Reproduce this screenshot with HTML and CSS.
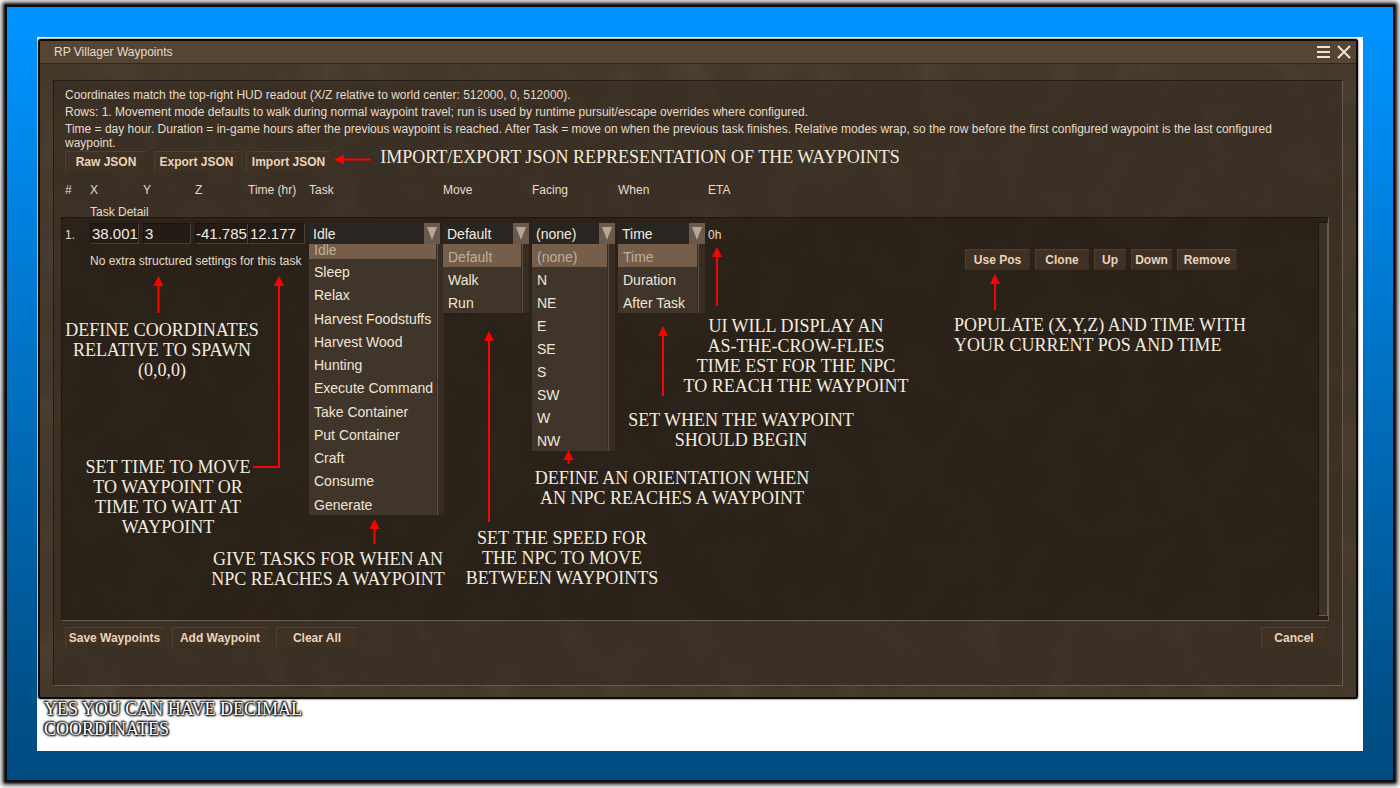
FILE: index.html
```html
<!DOCTYPE html>
<html lang="en">
<head>
  <meta charset="UTF-8">
  <meta name="viewport" content="width=device-width, initial-scale=1.0">
  <title>RP Villager Waypoints</title>
  <link rel="stylesheet" href="styles.css">
</head>
<body>
  <div class="frame">
    <div class="surface">
      <main class="window">
        <svg class="grain" aria-hidden="true">
          <filter id="grain" x="0" y="0" width="100%" height="100%">
            <feTurbulence type="fractalNoise" baseFrequency="0.025 0.02" numOctaves="4" seed="7"/>
            <feColorMatrix values="0 0 0 0 0.55  0 0 0 0 0.45  0 0 0 0 0.33  1.2 0 0 0 -0.45"/>
          </filter>
          <rect width="100%" height="100%" filter="url(#grain)"/>
        </svg>

        <header class="titlebar">
          <h1>RP Villager Waypoints</h1>
          <button class="icon-button" aria-label="Menu">
            <svg width="14" height="14" viewBox="0 0 14 14"><path d="M0 2h13M0 7h13M0 12h13"/></svg>
          </button>
          <button class="icon-button" aria-label="Close">
            <svg width="14" height="14" viewBox="0 0 14 14"><path d="M1 1l12 12M13 1L1 13"/></svg>
          </button>
        </header>

        <section class="panel">
          <div class="help">
            <p>Coordinates match the top-right HUD readout (X/Z relative to world center: 512000, 0, 512000).</p>
            <p>Rows: 1. Movement mode defaults to walk during normal waypoint travel; run is used by runtime pursuit/escape overrides where configured.</p>
            <p class="long">Time = day hour. Duration = in-game hours after the previous waypoint is reached. After Task = move on when the previous task finishes. Relative modes wrap, so the row before the first configured waypoint is the last configured waypoint.</p>
          </div>

          <div class="json-buttons">
            <button class="btn raw">Raw JSON</button>
            <button class="btn export">Export JSON</button>
            <button class="btn import">Import JSON</button>
          </div>

          <div class="columns head">
            <span>#</span>
            <label for="x">X</label>
            <label for="y">Y</label>
            <label for="z">Z</label>
            <label for="time">Time (hr)</label>
            <label for="task">Task</label>
            <label for="move">Move</label>
            <label for="facing">Facing</label>
            <label for="when">When</label>
            <span>ETA</span>
            <span class="detail">Task Detail</span>
          </div>

          <div class="list">
            <div class="columns row">
              <span class="number">1.</span>
              <input type="text" id="x" value="38.001">
              <input type="text" id="y" value="3">
              <input type="text" id="z" class="wide" value="-41.785">
              <input type="text" id="time" value="12.177">

              <div class="dropdown">
                <select id="task"><option>Idle</option></select>
                <span class="arrow"></span>
                <ul class="menu task-menu">
                  <li class="selected">Idle</li>
                  <li>Sleep</li>
                  <li>Relax</li>
                  <li>Harvest Foodstuffs</li>
                  <li>Harvest Wood</li>
                  <li>Hunting</li>
                  <li>Execute Command</li>
                  <li>Take Container</li>
                  <li>Put Container</li>
                  <li>Craft</li>
                  <li>Consume</li>
                  <li>Generate</li>
                </ul>
              </div>

              <div class="dropdown">
                <select id="move"><option>Default</option></select>
                <span class="arrow"></span>
                <ul class="menu">
                  <li class="selected">Default</li>
                  <li>Walk</li>
                  <li>Run</li>
                </ul>
              </div>

              <div class="dropdown">
                <select id="facing"><option>(none)</option></select>
                <span class="arrow"></span>
                <ul class="menu">
                  <li class="selected">(none)</li>
                  <li>N</li>
                  <li>NE</li>
                  <li>E</li>
                  <li>SE</li>
                  <li>S</li>
                  <li>SW</li>
                  <li>W</li>
                  <li>NW</li>
                </ul>
              </div>

              <div class="dropdown">
                <select id="when"><option>Time</option></select>
                <span class="arrow"></span>
                <ul class="menu">
                  <li class="selected">Time</li>
                  <li>Duration</li>
                  <li>After Task</li>
                </ul>
              </div>

              <span class="eta">0h</span>
              <span class="detail">No extra structured settings for this task</span>
              <div class="row-buttons">
                <button class="btn use-pos">Use Pos</button>
                <button class="btn clone">Clone</button>
                <button class="btn up">Up</button>
                <button class="btn down">Down</button>
                <button class="btn remove">Remove</button>
              </div>
            </div>
            <div class="scrollbar"></div>
          </div>

          <footer class="actions">
            <button class="btn save">Save Waypoints</button>
            <button class="btn add">Add Waypoint</button>
            <button class="btn clear">Clear All</button>
            <button class="btn cancel">Cancel</button>
          </footer>
        </section>
      </main>
      <p class="caption">YES YOU CAN HAVE DECIMAL<br>COORDINATES</p>
    </div>
  </div>

  <!-- Callouts drawn over the window -->
  <div class="notes">
    <svg class="arrows" width="1400" height="788" viewBox="0 0 1400 788" aria-hidden="true">
      <g class="lines">
        <path d="M371 159.500H343"/>
        <path d="M158.500 313V286"/>
        <path d="M253 467H279V286"/>
        <path d="M374.500 544V528"/>
        <path d="M489 522V340"/>
        <path d="M568.500 464V458"/>
        <path d="M663 396V335"/>
        <path d="M717 306V256"/>
        <path d="M995 310V283"/>
      </g>
      <g class="heads">
        <path d="M334 159.500l10-5v10z"/>
        <path d="M158.500 276l-5 10h10z"/>
        <path d="M279 276l-5 10h10z"/>
        <path d="M374.500 519l-5 10h10z"/>
        <path d="M489 331l-5 10h10z"/>
        <path d="M568.500 450l-5 10h10z"/>
        <path d="M663 326l-5 10h10z"/>
        <path d="M717 247l-5 10h10z"/>
        <path d="M995 274l-5 10h10z"/>
      </g>
    </svg>
    <p class="note json">IMPORT/EXPORT JSON REPRESENTATION OF THE WAYPOINTS</p>
    <p class="note coords">DEFINE COORDINATES<br>RELATIVE TO SPAWN<br>(0,0,0)</p>
    <p class="note time">SET TIME TO MOVE<br>TO WAYPOINT OR<br>TIME TO WAIT AT<br>WAYPOINT</p>
    <p class="note tasks">GIVE TASKS FOR WHEN AN<br>NPC REACHES A WAYPOINT</p>
    <p class="note speed">SET THE SPEED FOR<br>THE NPC TO MOVE<br>BETWEEN WAYPOINTS</p>
    <p class="note orientation">DEFINE AN ORIENTATION WHEN<br>AN NPC REACHES A WAYPOINT</p>
    <p class="note begin">SET WHEN THE WAYPOINT<br>SHOULD BEGIN</p>
    <p class="note eta-note">UI WILL DISPLAY AN<br>AS-THE-CROW-FLIES<br>TIME EST FOR THE NPC<br>TO REACH THE WAYPOINT</p>
    <p class="note populate">POPULATE (X,Y,Z) AND TIME WITH<br>YOUR CURRENT POS AND TIME</p>
  </div>
</body>
</html>
```
FILE: styles.css
```css
* {
  box-sizing: border-box;
}

body {
  position: relative;
  display: flex;
  min-height: 100vh;
  margin: 0;
  padding: 7px 7px 8px;
  background: #fff;
  color: #e6dccb;
  font-family: "Liberation Sans", Arial, sans-serif;
  font-size: 12px;
  overflow: hidden;
}

h1, p, ul {
  margin: 0;
  padding: 0;
}

button, input, select {
  margin: 0;
  font-family: inherit;
}

.frame {
  display: flex;
  flex: 1;
  padding: 30px 30px 29px;
  background: linear-gradient(#0093ff, #0091fb 6%, #004f87 92%, #004b80);
  box-shadow: 0 0 2px 3px #0a0a0a, 0 0 5px 5px #444;
}

.surface {
  display: flex;
  flex: 1;
  flex-direction: column;
  padding: 2px 5px 0 1px;
  background: #fff;
}

.window {
  position: relative;
  display: flex;
  flex: 1;
  flex-direction: column;
  border: 2px solid #0d0a08;
  border-radius: 3px;
  background: #43372a;
  box-shadow: 0 0 2px #000;
}

.grain {
  position: absolute;
  inset: 0;
  width: 100%;
  height: 100%;
  opacity: 0.12;
}

.titlebar {
  position: relative;
  display: flex;
  align-items: center;
  gap: 6px;
  height: 23px;
  padding: 0 5px 0 14px;
  border-bottom: 1px solid #30271e;
  background: #554535;
}

.titlebar h1 {
  flex: 1;
  font-size: 12px;
  font-weight: normal;
}

.icon-button {
  display: flex;
  padding: 0;
  border: none;
  background: none;
}

.icon-button svg {
  fill: none;
  stroke: #f0e4d0;
  stroke-width: 2;
}

.panel {
  position: relative;
  display: flex;
  flex: 1;
  flex-direction: column;
  margin: 16px 13px 11px;
  padding: 6px 13px 37px 11px;
  border: 1px solid;
  border-color: #241c15 #6b5d4b #6b5d4b #241c15;
  background: rgba(46, 36, 28, 0.4);
}

.help {
  padding-right: 10px;
}

.help p {
  line-height: 17px;
}

.help .long {
  margin-top: 1px;
  line-height: 14px;
}

.btn {
  height: 21px;
  padding: 0;
  border: 1px solid;
  border-color: #4c4033 #3a2d22 #3a2d22 #4c4033;
  background: #403125;
  color: #e9d5bb;
  font-size: 12px;
  font-weight: bold;
  white-space: nowrap;
}

.json-buttons {
  display: flex;
  gap: 7px;
  margin-top: 1px;
}

.raw, .clear {
  width: 82px;
}

.export, .import {
  width: 85px;
}

.columns {
  display: grid;
  grid-template-columns: 25px 53px 52px 53px 61px 134px 89px 86px 90px 1fr;
}

.head {
  margin-top: 10px;
  grid-template-rows: 22px 13px;
  line-height: 16px;
}

.detail {
  grid-column: 2 / span 4;
  white-space: nowrap;
}

.list {
  position: relative;
  flex: 1;
  margin-left: -4px;
  padding: 5px 0 0 3px;
  border: 1px solid;
  border-color: #1c1610 #6b5d4b #6b5d4b #1c1610;
  background: rgba(30, 23, 17, 0.55);
}

.row {
  grid-template-rows: 21px 21px;
  row-gap: 5px;
  line-height: 24px;
}

.row input {
  height: 21px;
  margin-right: 4px;
  padding: 0 0 0 1px;
  min-width: 0;
  border: 1px solid;
  border-color: #1a140f #4a4035 #4a4035 #1a140f;
  border-radius: 0;
  background: #231c15;
  color: #f2ebe0;
  font-size: 15px;
}

.row .wide {
  margin-right: 0;
  padding: 0;
}

.dropdown {
  position: relative;
  margin-right: 3px;
}

.dropdown select {
  display: block;
  width: 100%;
  height: 21px;
  padding: 0 4px;
  border: none;
  border-radius: 0;
  appearance: none;
  background: #292521;
  color: #f2ebe0;
  font-size: 14px;
}

.arrow {
  position: absolute;
  top: 0;
  right: 0;
  width: 16px;
  height: 21px;
  background: #6b5a4a;
  pointer-events: none;
}

.arrow::after {
  content: "";
  position: absolute;
  top: 4px;
  left: 3px;
  border: 5px solid transparent;
  border-top: 13px solid #b5a795;
  border-bottom: none;
}

.menu {
  position: absolute;
  z-index: 1;
  top: 21px;
  left: 0;
  right: 0;
  padding-right: 8px;
  background: linear-gradient(#5d5040, #5d5040) calc(100% - 6px) 0 / 1px 100% no-repeat, #372c22;
  list-style: none;
}

.menu li {
  height: 23px;
  padding-left: 5px;
  background: #40352a;
  color: #eee5d8;
  font-size: 14px;
  line-height: 27px;
  white-space: nowrap;
}

.menu .selected {
  background: #755f4b;
  color: #bfae99;
}

.task-menu {
  display: flex;
  flex-direction: column;
  right: -4px;
  height: 271px;
}

.task-menu li {
  flex: 1;
}

.task-menu .selected {
  flex: 0 0 15px;
  line-height: 13px;
}

.row-buttons {
  display: flex;
  grid-column: 6 / -1;
  justify-content: flex-end;
  gap: 5px;
  margin-right: 91px;
}

.use-pos {
  width: 65px;
}

.clone {
  width: 54px;
}

.up {
  width: 32px;
}

.down {
  width: 41px;
}

.remove {
  width: 60px;
}

.scrollbar {
  position: absolute;
  top: 4px;
  right: 0;
  bottom: 4px;
  width: 10px;
  border: 1px solid;
  border-color: #1c1610 #6b5d4b #6b5d4b #1c1610;
  background: #3b3127;
}

.actions {
  display: flex;
  gap: 8px;
  margin-top: 6px;
  padding-right: 2px;
}

.save {
  width: 99px;
}

.add {
  width: 96px;
}

.cancel {
  width: 66px;
  margin-left: auto;
}

.caption, .note {
  color: #fff;
  font-family: "Liberation Serif", "Times New Roman", serif;
  font-size: 18px;
  line-height: 20px;
  white-space: nowrap;
}

.caption {
  height: 52px;
  padding-left: 6px;
  text-shadow: 0 0 2px #000, 0 0 2px #000, 1px 1px 2px #000, -1px -1px 2px #000, 0 0 3px #000;
}

.notes {
  position: absolute;
  inset: 0;
  z-index: 2;
  pointer-events: none;
}

.arrows {
  position: absolute;
  top: 0;
  left: 0;
}

.lines {
  fill: none;
  stroke: #f00;
  stroke-width: 2;
}

.heads {
  fill: #f00;
}

/* each note is centred on its own point */
.note {
  position: absolute;
  color: #f3ebdf;
  text-align: center;
  transform: translateX(-50%);
}

.note.json {
  top: 147px;
  left: 640px;
}

.note.coords {
  top: 320px;
  left: 162px;
}

.note.time {
  top: 457px;
  left: 168px;
}

.note.tasks {
  top: 549px;
  left: 328px;
}

.note.speed {
  top: 528px;
  left: 562px;
}

.note.orientation {
  top: 468px;
  left: 672px;
}

.note.begin {
  top: 410px;
  left: 741px;
}

.note.eta-note {
  top: 316px;
  left: 796px;
}

.note.populate {
  top: 315px;
  left: 1100px;
  text-align: left;
}
```
